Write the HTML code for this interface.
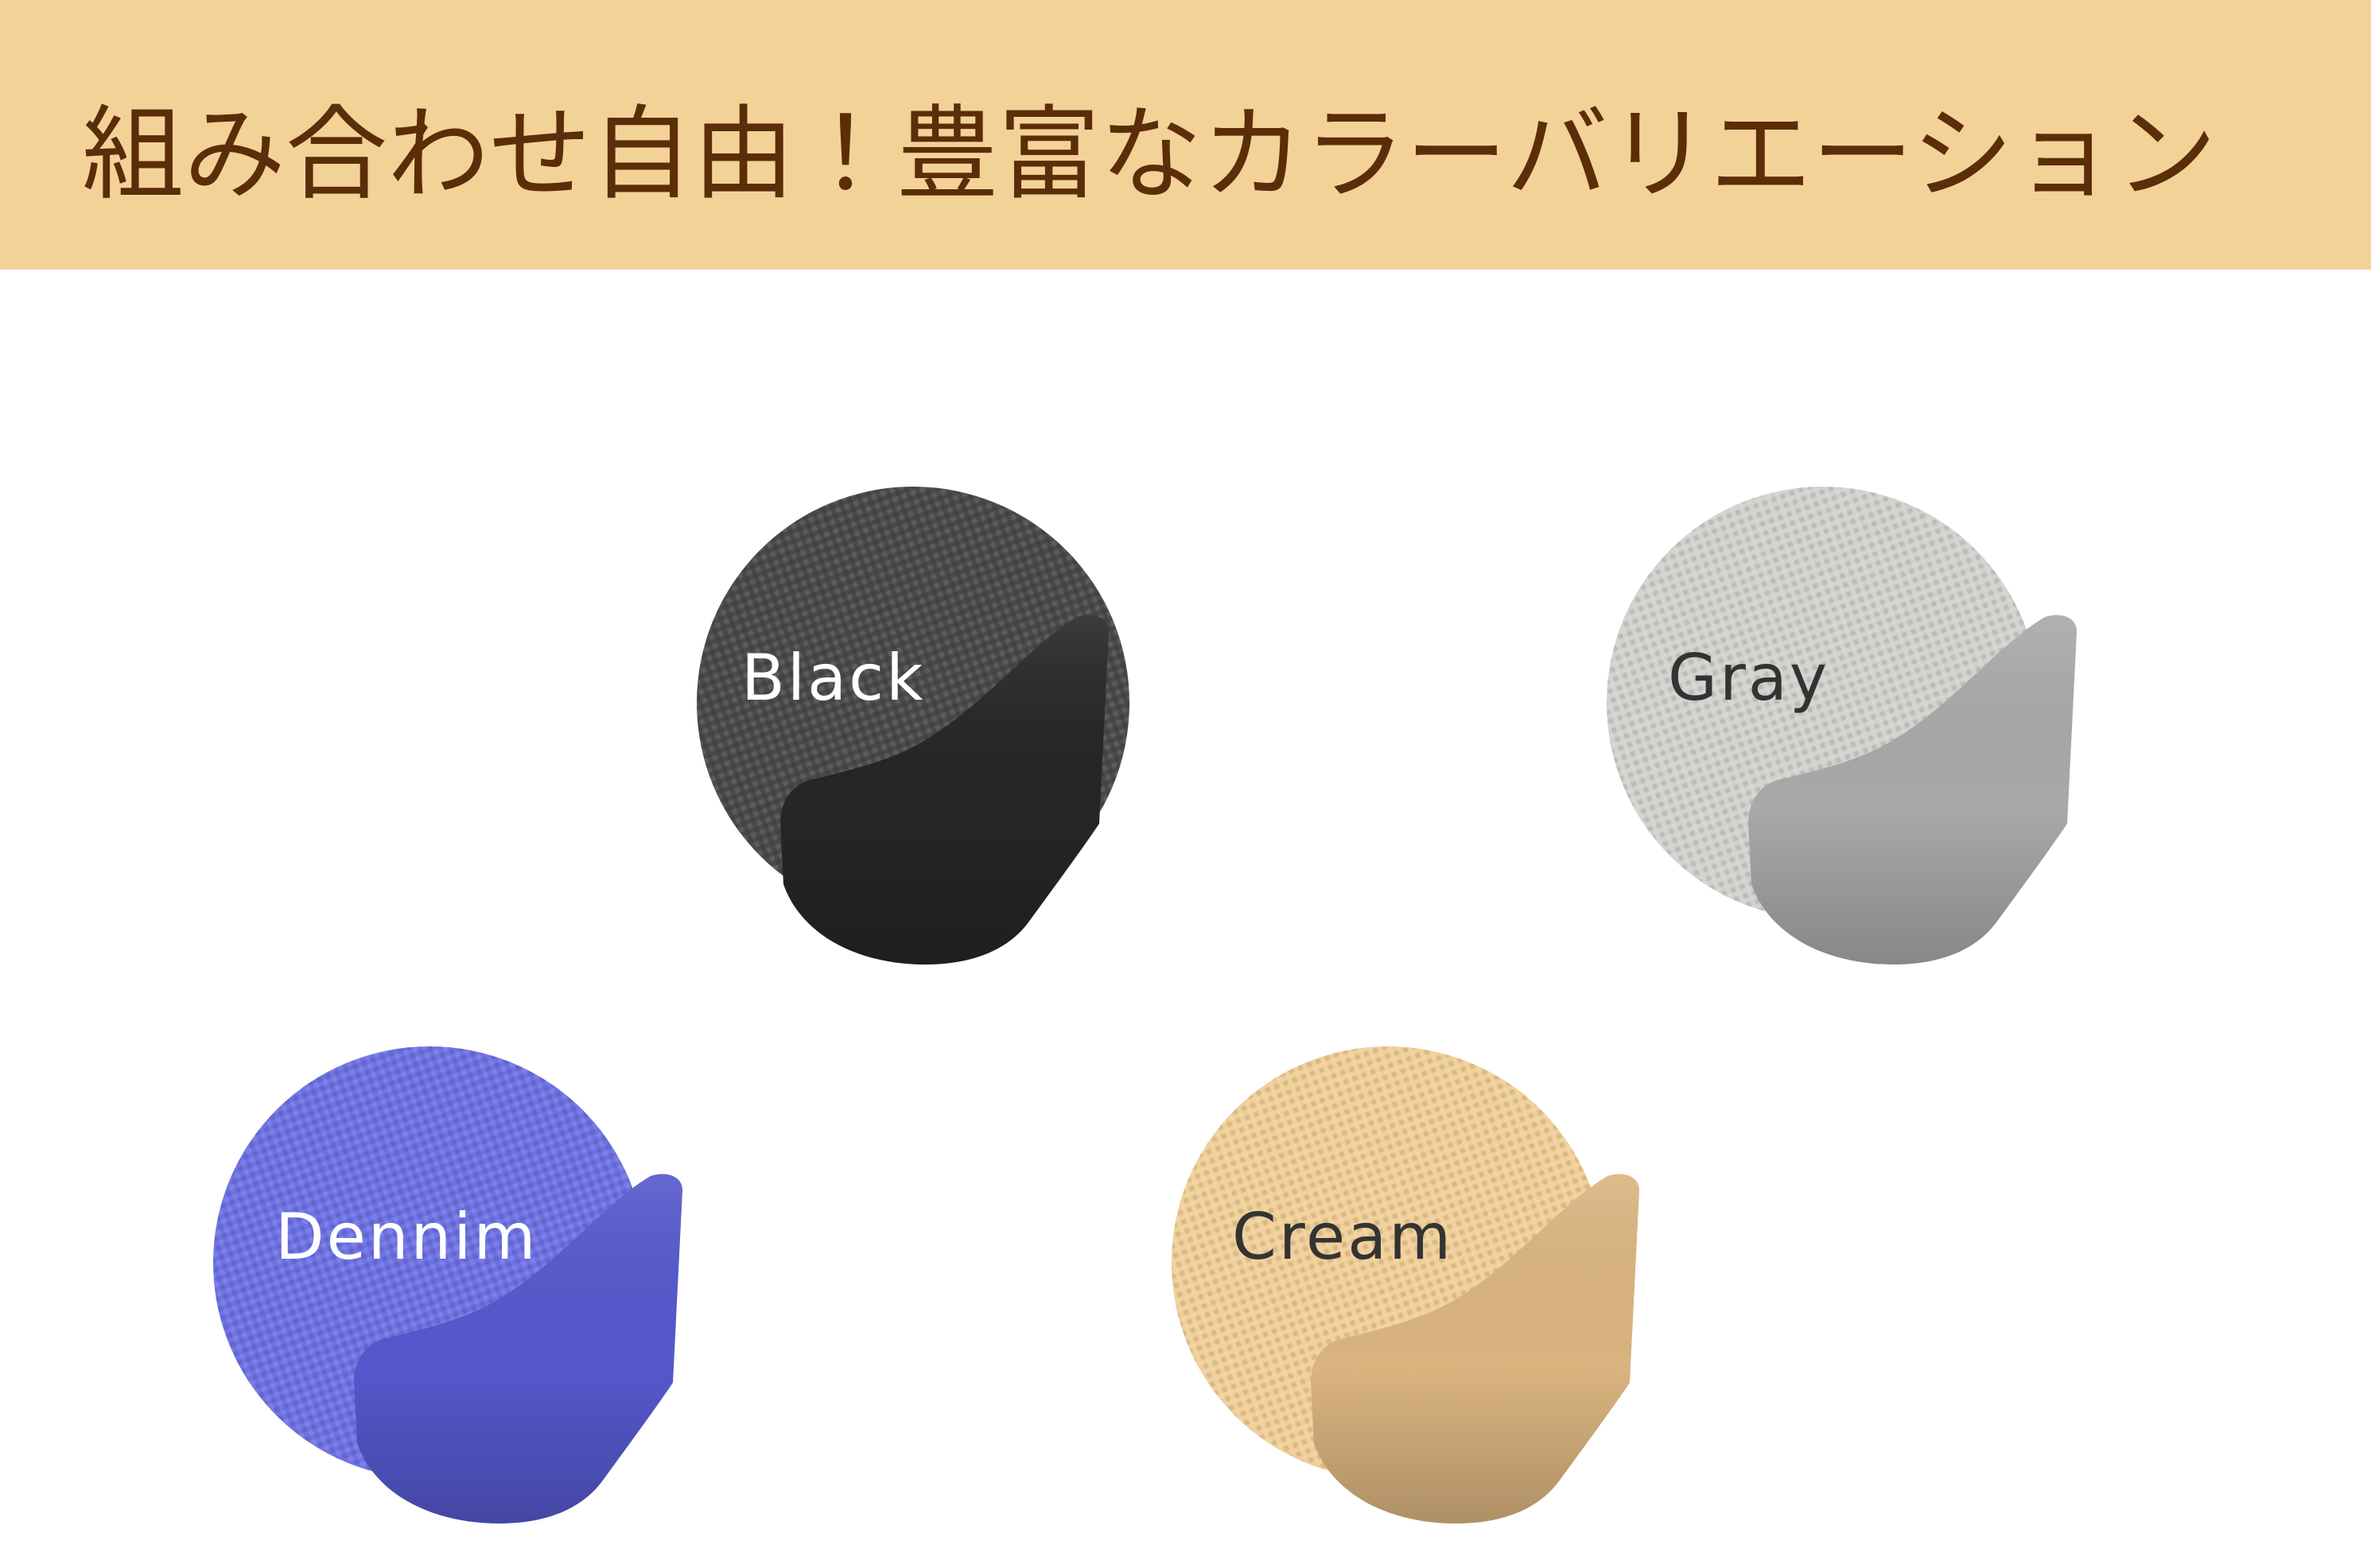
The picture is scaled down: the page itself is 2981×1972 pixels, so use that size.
<!DOCTYPE html>
<html><head><meta charset="utf-8"><style>
html,body{margin:0;padding:0;background:#fff;}
svg{display:block}
</style></head><body>
<svg width="2981" height="1972" viewBox="0 0 2981 1972" xmlns="http://www.w3.org/2000/svg">
<defs>
<pattern id="tex" width="12" height="12" patternUnits="userSpaceOnUse" patternTransform="rotate(-20)">
<rect width="6" height="6" fill="rgba(255,255,255,0.10)"/>
<rect x="6" y="6" width="6" height="6" fill="rgba(0,0,0,0.10)"/>
</pattern>
<linearGradient id="shade" x1="0" y1="0" x2="0" y2="1">
<stop offset="0" stop-color="#fff" stop-opacity="0.10"/>
<stop offset="0.55" stop-color="#000" stop-opacity="0"/>
<stop offset="1" stop-color="#000" stop-opacity="0.20"/>
</linearGradient>
<g id="chair">
<path d="M217,-89 C238,-96 258,-88 257,-70 L245,171 C215,215 185,255 156,295 C130,330 85,348 27,348 C-60,348 -130,310 -152,247 L-156,170 C-155,135 -135,118 -110,114 C-75,105 -45,98 -15,86 C80,50 150,-50 217,-89 Z"/>
</g>
</defs>
<rect x="0" y="0" width="2981" height="339" fill="#f3d297"/>
<text x="103" y="238" font-family="'Liberation Sans','Noto Sans CJK JP',sans-serif" font-size="128" fill="#5b2d08">組み合わせ自由！豊富なカラーバリエーション</text>

<!-- Black -->
<circle cx="1148" cy="884" r="272" fill="#4a4a4a"/><circle cx="1148" cy="884" r="272" fill="url(#tex)"/>
<g transform="translate(1137,865)"><use href="#chair" fill="#262626"/><use href="#chair" fill="url(#shade)"/></g>
<text x="932" y="880" font-family="'DejaVu Sans',sans-serif" font-size="80" letter-spacing="3" fill="#ffffff">Black</text>

<!-- Gray -->
<circle cx="2292" cy="884" r="272" fill="#d3d1ce"/><circle cx="2292" cy="884" r="272" fill="url(#tex)"/>
<g transform="translate(2354,865)"><use href="#chair" fill="#a9a9a9"/><use href="#chair" fill="url(#shade)"/></g>
<text x="2097" y="880" font-family="'DejaVu Sans',sans-serif" font-size="80" letter-spacing="3" fill="#333333">Gray</text>

<!-- Dennim -->
<circle cx="540" cy="1588" r="272" fill="#6e72e2"/><circle cx="540" cy="1588" r="272" fill="url(#tex)"/>
<g transform="translate(601,1568)"><use href="#chair" fill="#5558cc"/><use href="#chair" fill="url(#shade)"/></g>
<text x="346" y="1583" font-family="'DejaVu Sans',sans-serif" font-size="80" letter-spacing="3" fill="#ffffff">Dennim</text>

<!-- Cream -->
<circle cx="1745" cy="1588" r="272" fill="#f0cf98"/><circle cx="1745" cy="1588" r="272" fill="url(#tex)"/>
<g transform="translate(1804,1568)"><use href="#chair" fill="#dab47f"/><use href="#chair" fill="url(#shade)"/></g>
<text x="1549" y="1583" font-family="'DejaVu Sans',sans-serif" font-size="80" letter-spacing="3" fill="#333333">Cream</text>
</svg>
</body></html>
